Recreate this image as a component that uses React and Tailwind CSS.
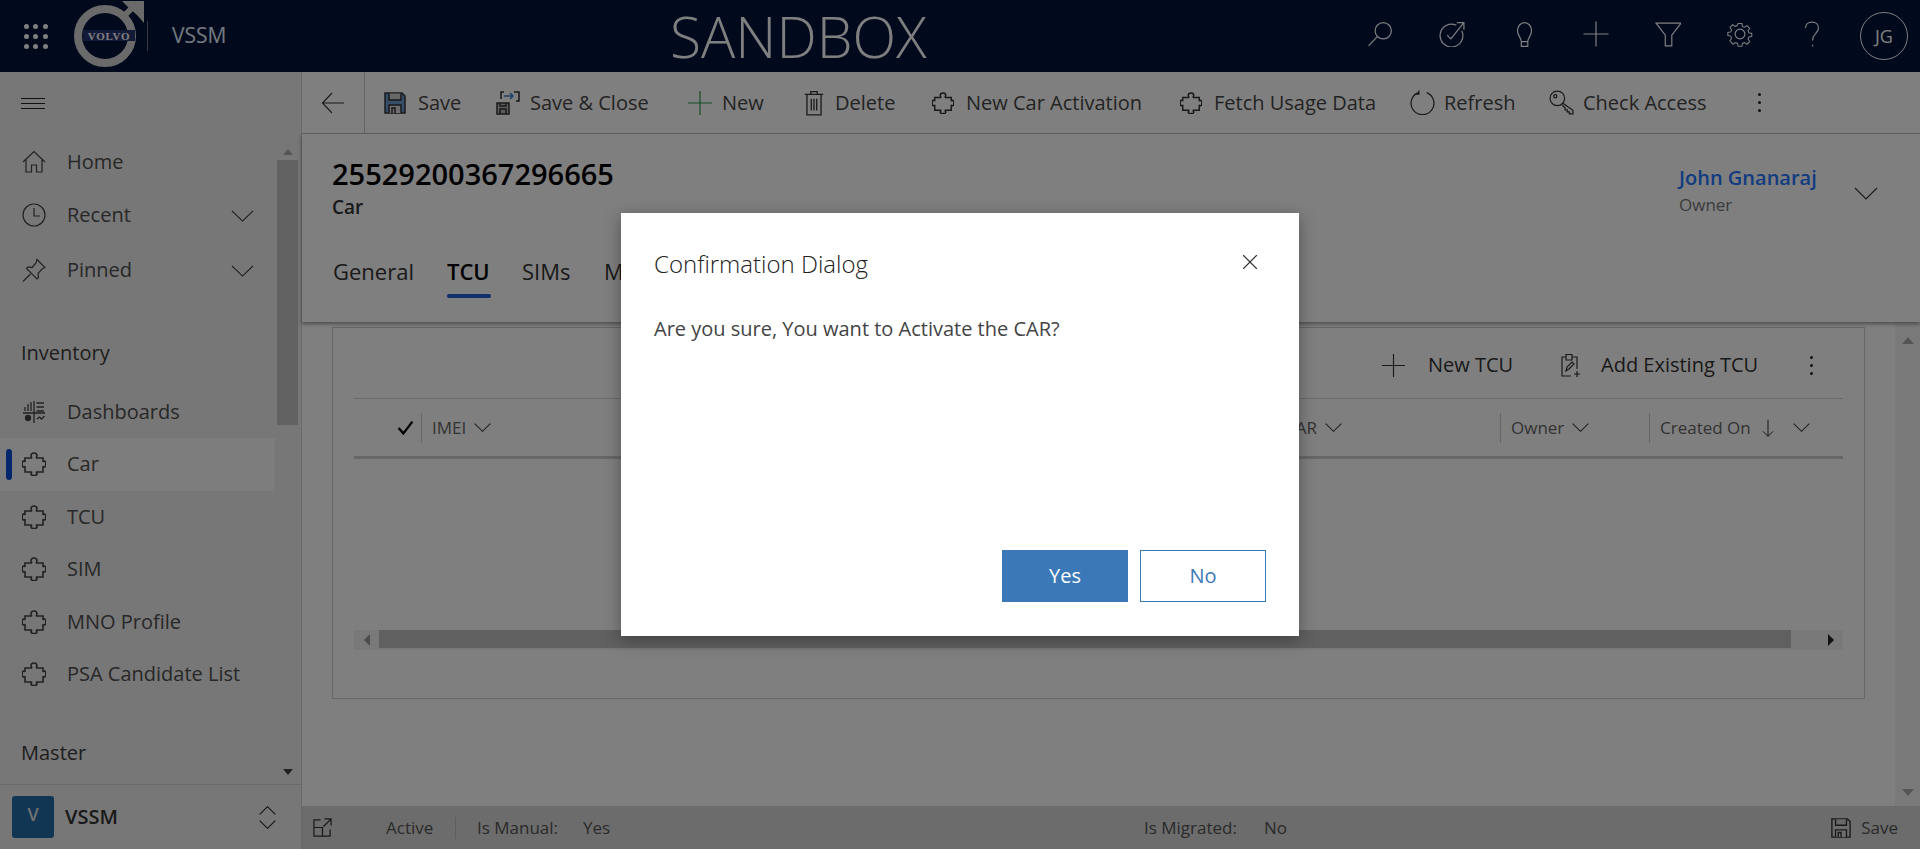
import { X } from "lucide-react"

const font = { fontFamily: '"Open Sans", "Noto Sans", sans-serif' }

// Thin outline icons, drawn on a 24 box
function Icon({ className, children, sw = 1.2 }) {
  return (
    <svg viewBox="0 0 24 24" fill="none" stroke="currentColor" strokeWidth={sw} className={className}>
      {children}
    </svg>
  )
}

// Wide flat chevron, stroke keeps its weight whatever the size
const Chevron = ({ className }) => (
  <svg viewBox="0 0 24 13" preserveAspectRatio="none" fill="none" stroke="currentColor" className={className}>
    <path d="M1 1 12 12 23 1" strokeWidth="1.100" vectorEffect="non-scaling-stroke" />
  </svg>
)

const PUZZLE =
  "M3 6H9.500C10 5 9 4.500 9 3.700 9 2 10.300 1 12 1s3 1 3 2.700c0 .8-1 1.300-.5 2.300H21V9.300C21.800 9.800 22 9 22.500 9 23.500 9 23.800 10.500 23.800 12S23.500 15 22.500 15C22 15 21.800 14.200 21 14.700V20H14.500C14 21 15 21.300 15 22 15 23 13.500 23.500 12 23.500S9 23 9 22C9 21.300 10 21 9.500 20H3V14.700C2.200 14.200 2 15 1.500 15 .5 15 .2 13.500 .2 12S.5 9 1.500 9C2 9 2.200 9.800 3 9.300Z"

const Puzzle = ({ className }) => (
  <Icon className={className} sw={1.6}>
    <path d={PUZZLE} />
  </Icon>
)

const SaveIcon = ({ className, fill }) => (
  <svg viewBox="0 0 22 22" fill="none" stroke="currentColor" strokeWidth="1.500" className={className}>
    <path d="M1 1h17l3 3v17H1z" fill={fill} />
    <path d="M5 1.500v6.500h12V1.500" fill="#cfcfcf" />
    <path d="M5 21v-8h12v8M8 21v-5h3v5" fill="#dddddd" />
  </svg>
)

function GridIcon() {
  const dots = [0, 1, 2, 3, 4, 5, 6, 7, 8]
  return (
    <div className="grid w-[23px] grid-cols-3 gap-[5px]">
      {dots.map((d) => (
        <span key={d} className="size-[5px] rounded-full bg-[#ffffff]" />
      ))}
    </div>
  )
}

function VolvoLogo() {
  return (
    <svg viewBox="0 0 72 72" className="h-[72px] w-[72px]">
      <circle cx="31" cy="37" r="27" fill="none" stroke="#d4d4d4" strokeWidth="8" />
      <path d="M50 17 62 5" stroke="#d4d4d4" strokeWidth="6" />
      <path d="M48 2h22v22l-7-8-8-7z" fill="#d4d4d4" />
      <rect x="9" y="31" width="52" height="11" fill="#27346f" />
      <text x="35" y="40.500" textAnchor="middle" fontSize="11" fontWeight="700" letterSpacing=".7" fill="#ffffff" fontFamily="Liberation Serif, serif">
        VOLVO
      </text>
    </svg>
  )
}

function TopIcon({ children }) {
  return (
    <div className="mt-[-4px] flex w-[72px] justify-center">
      <Icon className="size-[26px]" sw={1.1}>{children}</Icon>
    </div>
  )
}

function TopBar() {
  return (
    <header className="flex h-[72px] shrink-0 items-center bg-[#001438] text-[#ffffff]">
      <div className="flex w-[670px] shrink-0 items-center">
        <div className="ml-6"><GridIcon /></div>
        <div className="ml-[27px] mt-[-2px]"><VolvoLogo /></div>
        <div className="ml-[1px] h-[30px] w-px bg-[#777777]" />
        <span className="ml-[24px] text-[21px] text-[#e6f0ff]">VSSM</span>
      </div>
      <span className="text-[57px] font-light leading-[70px]">SANDBOX</span>
      <div className="ml-auto flex items-center pr-[12px]">
        <TopIcon>
          <circle cx="15" cy="9" r="7.500" />
          <path d="M9.500 14.500 1.500 23" />
        </TopIcon>
        <TopIcon>
          <path d="M21 9a10.500 10.500 0 1 1-5-5" />
          <path d="M7.500 13l3.500 3.500L22.500 2M16.500 1.500h6.500V8" />
        </TopIcon>
        <TopIcon>
          <path d="M9.500 19c0-3.500-3.500-5.500-3.500-10a6.500 7.500 0 0 1 13 0c0 4.500-3.500 6.500-3.500 10zM9.500 19v4.500h6V19" />
        </TopIcon>
        <TopIcon>
          <path d="M12 .5v23M.5 12h23" />
        </TopIcon>
        <TopIcon>
          <path d="M1 2h23L15.500 13v10h-6V13z" />
        </TopIcon>
        <TopIcon>
          <circle cx="12" cy="12" r="4.500" />
          <path d="M10 1h4l.6 3 2.200.9 2.600-1.700 2.800 2.800-1.700 2.600.9 2.200 3 .6v3.200l-3 .6-.9 2.200 1.700 2.600-2.800 2.800-2.600-1.700-2.200.9-.6 3h-4l-.6-3-2.200-.9-2.600 1.700L1.400 19l1.700-2.600-.9-2.200-3-.6v-3.200l3-.6.9-2.200L1.400 5l2.800-2.800 2.600 1.700L9 3z" transform="translate(1.500 1.500) scale(.875)" />
        </TopIcon>
        <TopIcon>
          <path d="M6 6.500C6 3 8.500 1 12 1s6 2.300 6 5.500c0 5-5.500 5-5.500 11.500M12.500 22v1.500" />
        </TopIcon>
        <div className="ml-[12px] flex size-[48px] items-center justify-center rounded-full border border-[#ffffff] text-[18px]">JG</div>
      </div>
    </header>
  )
}

function NavRow({ icon, label, chevron, active }) {
  return (
    <div className={`relative flex h-[52.5px] items-center pl-[22px] ${active ? "bg-[#fbfbfb]" : ""}`}>
      {active && <span className="absolute left-[6px] top-[11px] h-[31px] w-[6px] rounded-full bg-[#0b4fd8]" />}
      <span className="flex w-[45px] text-[#444444]">{icon}</span>
      <span className="text-[20px] text-[#505050]">{label}</span>
      {chevron && <Chevron className="absolute left-[231px] top-[21px] h-[12px] w-[23px] text-[#333333]" />}
    </div>
  )
}

function Sidebar() {
  const puzzle = <Puzzle className="size-[24px]" />
  return (
    <aside className="flex w-[302px] shrink-0 flex-col border-r border-[#d2d2d2] bg-[#eeeeee]">
      <div className="flex h-[62px] shrink-0 items-center pl-[21px]">
        <div className="flex w-[24px] flex-col gap-[4px]">
          <span className="h-px bg-[#222222]" />
          <span className="h-px bg-[#222222]" />
          <span className="h-px bg-[#222222]" />
        </div>
      </div>
      <div className="flex h-[651px] shrink-0 border-b border-[#d2d2d2]">
        <div className="w-[275px] pt-[2px]">
          <NavRow label="Home" icon={
            <Icon className="size-[24px]"><path d="M1 12 12 1.500 23 12M4 9.500V22h5.500v-7h5v7H20V9.500" /></Icon>
          } />
          <NavRow label="Recent" chevron icon={
            <Icon className="size-[24px]"><circle cx="12" cy="12" r="11" /><path d="M12 5v8h6" /></Icon>
          } />
          <div className="pt-[3px]">
            <NavRow label="Pinned" chevron icon={
              <Icon className="size-[24px]"><path d="M1 23.500 8.500 16M15 1.500l8 8-2.500 1-4.500 5 .5 4-1.500 1.500L4.500 10.500 6 9l4 .5 4-4.500z" /></Icon>
            } />
          </div>
          <div className="flex h-[74px] items-end pb-[3px] pl-[21px] text-[20px] text-[#3d3d3d]">Inventory</div>
          <div className="pt-[15px]">
            <NavRow label="Dashboards" icon={
              <Icon className="size-[24px]" sw={1.3}>
                <path d="M1 13h22M12 1v22M3 11V7M6 11V4M9 11V2M14.500 3H22M14.500 7H22M14.500 11H22" />
                <circle cx="6" cy="18" r="2.500" fill="currentColor" />
                <path d="M15 19l2.500-2 2 2 3-3" />
              </Icon>
            } />
          </div>
          <NavRow active label="Car" icon={puzzle} />
          <NavRow label="TCU" icon={puzzle} />
          <NavRow label="SIM" icon={puzzle} />
          <NavRow label="MNO Profile" icon={puzzle} />
          <NavRow label="PSA Candidate List" icon={puzzle} />
          <div className="flex h-[67px] items-end pl-[21px] text-[20px] text-[#3d3d3d]">Master</div>
        </div>
        <div className="ml-[2px] flex w-[21px] flex-col">
          <div className="flex h-[26px] items-end justify-center pb-[5px]">
            <span className="h-0 w-0 border-x-[5px] border-b-[6px] border-x-transparent border-b-[#aaaaaa]" />
          </div>
          <div className="h-[265px] bg-[#c4c4c4]" />
          <div className="flex flex-1 items-end justify-center pb-[9px]">
            <span className="h-0 w-0 border-x-[5px] border-t-[6px] border-x-transparent border-t-[#444444]" />
          </div>
        </div>
      </div>
      <div className="flex flex-1 items-center pl-[12px]">
        <div className="flex size-[42px] items-center justify-center rounded-[3px] bg-[#236ca8] pb-[6px] text-[18px] font-semibold text-[#e0e0e0]">V</div>
        <span className="ml-[11px] text-[20px] font-semibold text-[#333333]">VSSM</span>
        <div className="ml-auto mr-[25px] flex flex-col items-center gap-[5px] text-[#222222]">
          <Chevron className="h-[9px] w-[17px] rotate-180" />
          <Chevron className="h-[9px] w-[17px]" />
        </div>
      </div>
    </aside>
  )
}

function CmdItem({ w, icon, label }) {
  return (
    <div className={`flex shrink-0 items-center ${w}`}>
      <span className="flex w-[34px] shrink-0 text-[#333333]">{icon}</span>
      <span className="whitespace-nowrap text-[20px] text-[#474747]">{label}</span>
    </div>
  )
}

function CommandBar() {
  return (
    <div className="flex h-[62px] shrink-0 items-center border-b border-[#c8c8c8]">
      <div className="flex h-full w-[63px] items-center justify-center border-r border-[#c8c8c8] text-[#333333]">
        <Icon className="size-[24px]" sw={1.1}><path d="M23 12H1.500M11 2 1.500 12 11 22" /></Icon>
      </div>
      <div className="flex items-center pl-[19px]">
        <CmdItem w="w-[112px]" label="Save" icon={<SaveIcon className="size-[22px]" fill="#6a9fd0" />} />
        <CmdItem w="w-[192px]" label="Save & Close" icon={
          <svg viewBox="0 0 24 24" fill="none" stroke="currentColor" strokeWidth="1.500" className="size-[24px]">
            <path d="M1 12h12v11H1z" fill="#bbbbbb" />
            <path d="M4 23v-5h6v5M4 12v3h6v-3" />
            <path d="M5 8V1h3M18 1h5v9h-3" />
            <path d="M8 5h9M14 2l3 3-3 3" stroke="#3f80c8" />
          </svg>
        } />
        <CmdItem w="w-[113px]" label="New" icon={
          <Icon className="size-[24px] text-[#2a9a4a]"><path d="M12 0v24M0 12h24" /></Icon>
        } />
        <CmdItem w="w-[131px]" label="Delete" icon={
          <Icon className="size-[26px]"><path d="M3.500 4h17M5.500 4v19h13V4M9 4V1.500h6V4M9.500 8v11M12 8v11M14.500 8v11" /></Icon>
        } />
        <CmdItem w="w-[248px]" label="New Car Activation" icon={<Puzzle className="size-[22px]" />} />
        <CmdItem w="w-[230px]" label="Fetch Usage Data" icon={<Puzzle className="size-[22px]" />} />
        <CmdItem w="w-[139px]" label="Refresh" icon={
          <Icon className="size-[25px]"><path d="M16 2.500a11 11 0 1 1-8 0M8.500 .5v3.500H4.500" /></Icon>
        } />
        <CmdItem w="w-[209px]" label="Check Access" icon={
          <Icon className="size-[25px]"><circle cx="8" cy="8" r="7" /><circle cx="6" cy="6" r="1.500" /><path d="M13 12.500l10 7v3.500h-3.500v-2h-2v-2h-2v-2l-3-2.500" /></Icon>
        } />
        <Dots />
      </div>
    </div>
  )
}

function Dots() {
  return (
    <div className="flex w-[4px] flex-col gap-[5px]">
      <span className="size-[3px] rounded-full bg-[#222222]" />
      <span className="size-[3px] rounded-full bg-[#222222]" />
      <span className="size-[3px] rounded-full bg-[#222222]" />
    </div>
  )
}

function ColHead({ label, w, extra, gap = "ml-[8px]" }) {
  return (
    <div className={`flex h-[30px] items-center border-l border-[#cccccc] pl-[10px] text-[17px] text-[#666666] ${w}`}>
      <span>{label}</span>
      {extra}
      <Chevron className={`h-[9px] w-[17px] text-[#444444] ${gap}`} />
    </div>
  )
}

function SubGrid() {
  return (
    <div className="mx-[21px] mt-px flex h-[321px] flex-col">
      <div className="flex h-[70px] shrink-0 items-center border-b border-[#d4d4d4] pt-[3px]">
        <div className="ml-auto flex items-center">
          <Icon className="size-[23px] text-[#333333]"><path d="M12 0v24M0 12h24" /></Icon>
          <span className="ml-[23px] w-[130px] text-[20px] text-[#333333]">New TCU</span>
          <Icon className="size-[24px] text-[#333333]">
            <path d="M13 23H4V4h4V1.500h6V4h5v12M8 4v3h6V4M8 18l1-4 5-5 2 2-5 5zM16 21h6M19 18v6" />
          </Icon>
          <span className="ml-[19px] w-[209px] text-[20px] text-[#333333]">Add Existing TCU</span>
          <Dots />
          <span className="w-[29px]" />
        </div>
      </div>
      <div className="flex h-[60px] shrink-0 items-center border-b-[3px] border-[#d0cfcd]">
        <svg viewBox="0 0 16 16" className="ml-[43px] size-[17px]" fill="none" stroke="#000000" strokeWidth="2.200"><path d="M1.500 8.500 6 13.500 14.500 2.500" /></svg>
        <div className="ml-[7px]"><ColHead label="IMEI" w="w-[853px]" /></div>
        <ColHead label="CAR" w="w-[226px]" />
        <ColHead label="Owner" w="w-[149px]" />
        <ColHead label="Created On" w="w-[190px]" gap="ml-[15px]" extra={
          <Icon className="ml-[7px] size-[20px] text-[#333333]"><path d="M12 2v20M6 16l6 6 6-6" /></Icon>
        } />
      </div>
      <div className="flex-1" />
      <div className="flex h-[20px] shrink-0 bg-[#f2f2f2]">
        <div className="flex w-[25px] items-center justify-center">
          <span className="h-0 w-0 border-y-[6px] border-r-[6px] border-y-transparent border-r-[#999999]" />
        </div>
        <div className="h-[18px] w-[1412px] bg-[#c0c0c0]" />
        <div className="flex flex-1 items-center justify-end pr-[9px]">
          <span className="h-0 w-0 border-y-[6px] border-l-[6px] border-y-transparent border-l-[#222222]" />
        </div>
      </div>
    </div>
  )
}

function FormArea() {
  return (
    <div className="flex min-h-0 flex-1 flex-col">
      <div className="relative h-[188px] shrink-0 pl-[30px] shadow-[0_2px_4px_rgba(0,0,0,0.4)]">
        <div className="pt-[20px] text-[29px] font-semibold leading-[40px] text-[#000000]">25529200367296665</div>
        <div className="pt-px text-[19px] font-semibold leading-[24px] text-[#333333]">Car</div>
        <div className="ml-px mt-[36px] flex text-[22px] leading-[32px] text-[#333333]">
          <span className="w-[114px]">General</span>
          <span className="relative w-[75px] font-semibold text-[#000000]">
            TCU
            <span className="absolute left-0 top-[39px] h-[4px] w-[44px] rounded-full bg-[#1f5fd0]" />
          </span>
          <span className="w-[82px]">SIMs</span>
          <span>MNO</span>
        </div>
        <div className="absolute left-[1377px] top-[30px]">
          <div className="text-[20px] font-semibold leading-[28px] text-[#2676ff]">John Gnanaraj</div>
          <div className="text-[17px] leading-[26px] text-[#777777]">Owner</div>
        </div>
        <Chevron className="absolute left-[1552px] top-[53px] h-[13px] w-[24px] text-[#333333]" />
      </div>
      <div className="flex min-h-0 flex-1">
        <div className="min-w-0 flex-1 pl-[30px] pr-[30px] pt-[5px]">
          <div className="h-[372px] border border-[#cfcfcf]">
            <SubGrid />
          </div>
        </div>
        <div className="flex w-[25px] shrink-0 flex-col items-center justify-between bg-[#f4f4f4] pb-[10px] pt-[15px]">
          <span className="h-0 w-0 border-x-[6px] border-b-[7px] border-x-transparent border-b-[#aaaaaa]" />
          <span className="h-0 w-0 border-x-[6px] border-t-[7px] border-x-transparent border-t-[#aaaaaa]" />
        </div>
      </div>
    </div>
  )
}

function StatusBar() {
  return (
    <footer className="flex h-[43px] shrink-0 items-center bg-[#d8d8d8] text-[17px] text-[#555555]">
      <svg viewBox="0 0 20 20" fill="none" stroke="#333333" strokeWidth="1.300" className="ml-[11px] size-[19px]">
        <path d="M8 2H1v17h17v-7M1 10h9v9M12 1h7v7M19 1l-8 8" />
      </svg>
      <span className="ml-[54px] w-[69px]">Active</span>
      <span className="h-[22px] w-px bg-[#bbbbbb]" />
      <span className="ml-[21px] w-[106px]">Is Manual:</span>
      <span className="w-[561px]">Yes</span>
      <span className="w-[120px]">Is Migrated:</span>
      <span>No</span>
      <div className="ml-auto flex items-center pr-[22px]">
        <SaveIcon className="size-[20px] text-[#333333]" fill="none" />
        <span className="ml-[10px]">Save</span>
      </div>
    </footer>
  )
}

function ConfirmDialog() {
  return (
    <div className="absolute inset-0 flex items-center justify-center bg-[#000000]/50">
      <div className="relative flex h-[423px] w-[678px] flex-col bg-[#ffffff] px-[33px] shadow-[0_4px_16px_rgba(0,0,0,0.35)]">
        <h1 className="pt-[34px] text-[24px] font-light leading-[34px] text-[#222222]">Confirmation Dialog</h1>
        <X strokeWidth={1} className="absolute left-[616px] top-[36px] size-[26px] text-[#333333]" />
        <p className="mt-[34px] text-[20px] leading-[28px] text-[#444444]">Are you sure, You want to Activate the CAR?</p>
        <div className="ml-auto mt-auto mb-[34px] flex gap-[12px] text-[20px]">
          <button className="h-[52px] w-[126px] bg-[#3b78b8] font-medium text-[#ffffff]">Yes</button>
          <button className="h-[52px] w-[126px] border border-[#3b78b8] bg-[#ffffff] text-[#3b78b8]">No</button>
        </div>
      </div>
    </div>
  )
}

export default function App() {
  return (
    <div className="relative flex h-screen w-full flex-col overflow-hidden bg-[#ffffff]" style={font}>
      <TopBar />
      <div className="flex min-h-0 flex-1">
        <Sidebar />
        <main className="flex min-w-0 flex-1 flex-col">
          <CommandBar />
          <FormArea />
          <StatusBar />
        </main>
      </div>
      <ConfirmDialog />
    </div>
  )
}
